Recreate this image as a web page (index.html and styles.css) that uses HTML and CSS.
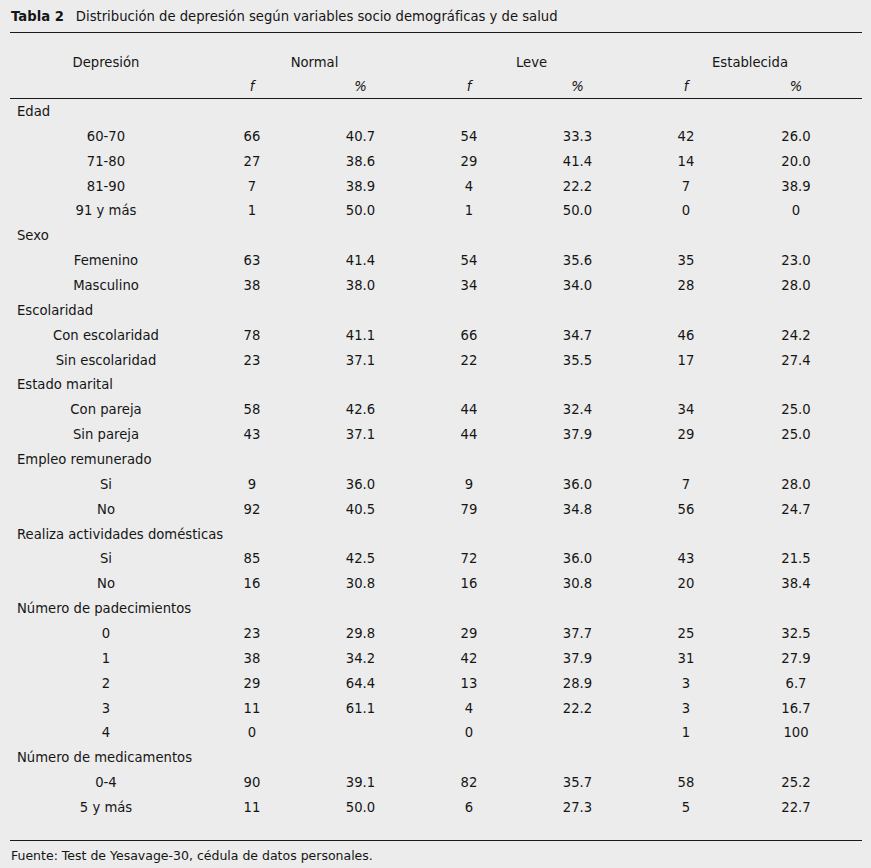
FILE: index.html
```html
<!DOCTYPE html>
<html lang="es">
<head>
<meta charset="utf-8">
<title>Tabla 2</title>
<link rel="stylesheet" href="styles.css">
</head>
<body>
<div class="page">
  <div class="caption"><span class="tag">Tabla 2</span><span class="ctext">Distribución de depresión según variables socio demográficas y de salud</span></div>
  <table class="data">
    <colgroup>
      <col class="c-label"><col class="c-f"><col class="c-p"><col class="c-f"><col class="c-p"><col class="c-f"><col class="c-plast">
    </colgroup>
    <thead>
      <tr class="h1">
        <th>Depresión</th>
        <th colspan="2">Normal</th>
        <th colspan="2">Leve</th>
        <th colspan="2" class="last">Establecida</th>
      </tr>
      <tr class="h2">
        <th></th>
        <th class="it">f</th><th class="it">%</th>
        <th class="it">f</th><th class="it">%</th>
        <th class="it">f</th><th class="it last">%</th>
      </tr>
    </thead>
    <tbody>
      <tr class="cat"><td colspan="7">Edad</td></tr>
      <tr><td>60-70</td><td>66</td><td>40.7</td><td>54</td><td>33.3</td><td>42</td><td class="last">26.0</td></tr>
      <tr><td>71-80</td><td>27</td><td>38.6</td><td>29</td><td>41.4</td><td>14</td><td class="last">20.0</td></tr>
      <tr><td>81-90</td><td>7</td><td>38.9</td><td>4</td><td>22.2</td><td>7</td><td class="last">38.9</td></tr>
      <tr><td>91 y más</td><td>1</td><td>50.0</td><td>1</td><td>50.0</td><td>0</td><td class="last">0</td></tr>
      <tr class="cat"><td colspan="7">Sexo</td></tr>
      <tr><td>Femenino</td><td>63</td><td>41.4</td><td>54</td><td>35.6</td><td>35</td><td class="last">23.0</td></tr>
      <tr><td>Masculino</td><td>38</td><td>38.0</td><td>34</td><td>34.0</td><td>28</td><td class="last">28.0</td></tr>
      <tr class="cat"><td colspan="7">Escolaridad</td></tr>
      <tr><td>Con escolaridad</td><td>78</td><td>41.1</td><td>66</td><td>34.7</td><td>46</td><td class="last">24.2</td></tr>
      <tr><td>Sin escolaridad</td><td>23</td><td>37.1</td><td>22</td><td>35.5</td><td>17</td><td class="last">27.4</td></tr>
      <tr class="cat"><td colspan="7">Estado marital</td></tr>
      <tr><td>Con pareja</td><td>58</td><td>42.6</td><td>44</td><td>32.4</td><td>34</td><td class="last">25.0</td></tr>
      <tr><td>Sin pareja</td><td>43</td><td>37.1</td><td>44</td><td>37.9</td><td>29</td><td class="last">25.0</td></tr>
      <tr class="cat"><td colspan="7">Empleo remunerado</td></tr>
      <tr><td>Si</td><td>9</td><td>36.0</td><td>9</td><td>36.0</td><td>7</td><td class="last">28.0</td></tr>
      <tr><td>No</td><td>92</td><td>40.5</td><td>79</td><td>34.8</td><td>56</td><td class="last">24.7</td></tr>
      <tr class="cat"><td colspan="7">Realiza actividades domésticas</td></tr>
      <tr><td>Si</td><td>85</td><td>42.5</td><td>72</td><td>36.0</td><td>43</td><td class="last">21.5</td></tr>
      <tr><td>No</td><td>16</td><td>30.8</td><td>16</td><td>30.8</td><td>20</td><td class="last">38.4</td></tr>
      <tr class="cat"><td colspan="7">Número de padecimientos</td></tr>
      <tr><td>0</td><td>23</td><td>29.8</td><td>29</td><td>37.7</td><td>25</td><td class="last">32.5</td></tr>
      <tr><td>1</td><td>38</td><td>34.2</td><td>42</td><td>37.9</td><td>31</td><td class="last">27.9</td></tr>
      <tr><td>2</td><td>29</td><td>64.4</td><td>13</td><td>28.9</td><td>3</td><td class="last">6.7</td></tr>
      <tr><td>3</td><td>11</td><td>61.1</td><td>4</td><td>22.2</td><td>3</td><td class="last">16.7</td></tr>
      <tr><td>4</td><td>0</td><td></td><td>0</td><td></td><td>1</td><td class="last">100</td></tr>
      <tr class="cat"><td colspan="7">Número de medicamentos</td></tr>
      <tr><td>0-4</td><td>90</td><td>39.1</td><td>82</td><td>35.7</td><td>58</td><td class="last">25.2</td></tr>
      <tr><td>5 y más</td><td>11</td><td>50.0</td><td>6</td><td>27.3</td><td>5</td><td class="last">22.7</td></tr>
    </tbody>
  </table>
  <div class="source">Fuente: Test de Yesavage-30, cédula de datos personales.</div>
</div>
</body>
</html>
```
FILE: styles.css
```css
html, body {
  margin: 0;
  padding: 0;
  background: #ececec;
}
body {
  font-family: "DejaVu Sans", sans-serif;
  font-size: 13.2px;
  color: #151515;
}
.page {
  width: 852px;
  padding: 7px 0 0 10px;
}
.caption {
  height: 20px;
  line-height: 20px;
  padding-left: 1px;
  border-bottom: 1px solid #1a1a1a;
  padding-bottom: 5px;
}
.tag {
  font-weight: bold;
  margin-right: 12px;
}
.data {
  width: 852px;
  border-collapse: collapse;
  table-layout: fixed;
  border-bottom: 1px solid #1a1a1a;
  margin-top: 17px;
}
.c-label { width: 192px; }
.c-f { width: 100px; }
.c-p { width: 117px; }
.c-plast { width: 126px; }
.data th {
  font-weight: normal;
  text-align: center;
  padding: 2px 0 0 0;
  height: 22px;
  line-height: 22px;
}
.data th.last { padding-right: 6px; }
.data .h2 th {
  border-bottom: 1px solid #1a1a1a;
}
.data .it { font-style: italic; }
.data .h1 th:not(:first-child) { padding-left: 8px; }
.data td {
  padding: 2px 0 0 0;
  height: 22.86px;
  line-height: 22.86px;
  text-align: center;
  white-space: nowrap;
}
.data td.last { padding-right: 6px; }
.data tbody tr:last-child td { padding-bottom: 20px; }
.data .cat td {
  text-align: left;
  padding-left: 7px;
}
.source {
  font-size: 12.5px;
  line-height: 18px;
  padding-top: 6px;
  padding-left: 1px;
}
```
